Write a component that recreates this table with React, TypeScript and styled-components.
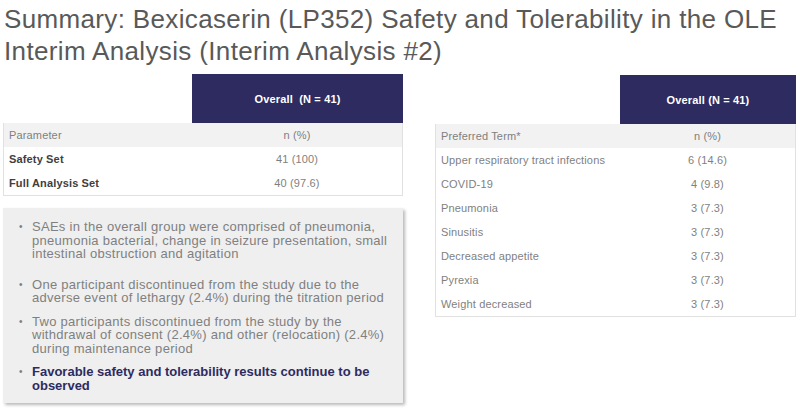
import React from 'react'
import styled, { createGlobalStyle } from 'styled-components'

const GlobalStyle = createGlobalStyle`
  html, body {
    margin: 0;
    padding: 0;
    background: #ffffff;
  }
  body {
    width: 800px;
    height: 409px;
    overflow: hidden;
    font-family: 'Liberation Sans', Arial, sans-serif;
  }
`

const Slide = styled.div`
  width: 800px;
  height: 409px;
  box-sizing: border-box;
  padding: 3px 4px 0 3px;
  display: flex;
  flex-direction: column;
`

const Title = styled.h1`
  margin: 0 0 0 1px;
  font-family: 'Liberation Sans', Arial, sans-serif;
  font-weight: 400;
  font-size: 26px;
  line-height: 32px;
  color: #595959;
  letter-spacing: 0.35px;
  white-space: nowrap;
`

const Columns = styled.div`
  margin-top: 7px;
  display: flex;
  gap: 32px;
  align-items: flex-start;
`

const LeftColumn = styled.div`
  width: 400px;
  display: flex;
  flex-direction: column;
  gap: 12px;
`

const RightColumn = styled.div`
  width: 361px;
  margin-top: 1px;
`

type TableProps = {
  labelWidth: number
}

const Table = styled.div<TableProps>`
  display: grid;
  grid-template-columns: ${props => props.labelWidth}px 1fr;
  font-size: 11px;
  letter-spacing: 0.15px;
  color: #7f7f7f;
`

const HeadBlank = styled.div`
  height: 49px;
`

const HeadCell = styled.div`
  height: 49px;
  background: #2d2b5f;
  color: #ffffff;
  font-weight: 700;
  font-size: 11px;
  display: flex;
  align-items: center;
  justify-content: center;
  white-space: pre;
`

const Body = styled.div`
  grid-column: 1 / 3;
  border: 1px solid #e1e1e1;
  border-top: none;
  display: grid;
  grid-template-columns: subgrid;
`

type CellProps = {
  shaded?: boolean
  strong?: boolean
}

const LabelCell = styled.div<CellProps>`
  height: 24px;
  padding-left: 5px;
  display: flex;
  align-items: center;
  background: ${props => (props.shaded ? '#f2f2f2' : 'transparent')};
  font-weight: ${props => (props.strong ? 700 : 400)};
  color: ${props => (props.strong ? '#404040' : '#7f7f7f')};
`

const ValueCell = styled.div<CellProps>`
  height: 24px;
  display: flex;
  align-items: center;
  justify-content: center;
  background: ${props => (props.shaded ? '#f2f2f2' : 'transparent')};
`

const NoteBox = styled.div`
  width: 400px;
  box-sizing: border-box;
  height: 195px;
  background: #efefef;
  box-shadow: 2px 2px 3px rgba(0, 0, 0, 0.28);
  padding: 12px 8px 0 16px;
`

const Bullets = styled.ul`
  margin: 0;
  padding: 0;
  list-style: none;
`

type BulletProps = {
  emphasis?: boolean
  spacing: number
}

const Bullet = styled.li<BulletProps>`
  position: relative;
  padding-left: 13px;
  margin-bottom: ${props => props.spacing}px;
  font-size: 13px;
  line-height: 13.5px;
  letter-spacing: ${props => (props.emphasis ? '0' : '0.28px')};
  color: ${props => (props.emphasis ? '#2d2b5f' : '#808080')};
  font-weight: ${props => (props.emphasis ? 700 : 400)};
  &::before {
    content: '•';
    position: absolute;
    left: 0;
    top: 0;
    font-size: 10px;
    font-weight: 400;
    color: #808080;
  }
`

const paramRows = [
  { label: 'Safety Set', value: '41 (100)' },
  { label: 'Full Analysis Set', value: '40 (97.6)' },
]

const termRows = [
  { label: 'Upper respiratory tract infections', value: '6 (14.6)' },
  { label: 'COVID-19', value: '4 (9.8)' },
  { label: 'Pneumonia', value: '3 (7.3)' },
  { label: 'Sinusitis', value: '3 (7.3)' },
  { label: 'Decreased appetite', value: '3 (7.3)' },
  { label: 'Pyrexia', value: '3 (7.3)' },
  { label: 'Weight decreased', value: '3 (7.3)' },
]

const notes = [
  {
    text: 'SAEs in the overall group were comprised of pneumonia, pneumonia bacterial, change in seizure presentation, small intestinal obstruction and agitation',
    spacing: 17,
  },
  {
    text: 'One participant discontinued from the study due to the adverse event of lethargy (2.4%) during the titration period',
    spacing: 10,
  },
  {
    text: 'Two participants discontinued from the study by the withdrawal of consent (2.4%) and other (relocation) (2.4%) during maintenance period',
    spacing: 10,
  },
  {
    text: 'Favorable safety and tolerability results continue to be observed',
    spacing: 0,
    emphasis: true,
  },
]

const App = () => (
  <>
    <GlobalStyle />
    <Slide>
      <Title>
        Summary: Bexicaserin (LP352) Safety and Tolerability in the OLE
        <br />
        Interim Analysis (Interim Analysis #2)
      </Title>
      <Columns>
        <LeftColumn>
          <Table labelWidth={189}>
            <HeadBlank />
            <HeadCell>{'Overall  (N = 41)'}</HeadCell>
            <Body>
              <LabelCell shaded>Parameter</LabelCell>
              <ValueCell shaded>n (%)</ValueCell>
              {paramRows.map(row => (
                <React.Fragment key={row.label}>
                  <LabelCell strong>{row.label}</LabelCell>
                  <ValueCell>{row.value}</ValueCell>
                </React.Fragment>
              ))}
            </Body>
          </Table>
          <NoteBox>
            <Bullets>
              {notes.map(note => (
                <Bullet key={note.text} spacing={note.spacing} emphasis={note.emphasis}>
                  {note.text}
                </Bullet>
              ))}
            </Bullets>
          </NoteBox>
        </LeftColumn>
        <RightColumn>
          <Table labelWidth={185}>
            <HeadBlank />
            <HeadCell>Overall (N = 41)</HeadCell>
            <Body>
              <LabelCell shaded>Preferred Term*</LabelCell>
              <ValueCell shaded>n (%)</ValueCell>
              {termRows.map(row => (
                <React.Fragment key={row.label}>
                  <LabelCell>{row.label}</LabelCell>
                  <ValueCell>{row.value}</ValueCell>
                </React.Fragment>
              ))}
            </Body>
          </Table>
        </RightColumn>
      </Columns>
    </Slide>
  </>
)

export default App
